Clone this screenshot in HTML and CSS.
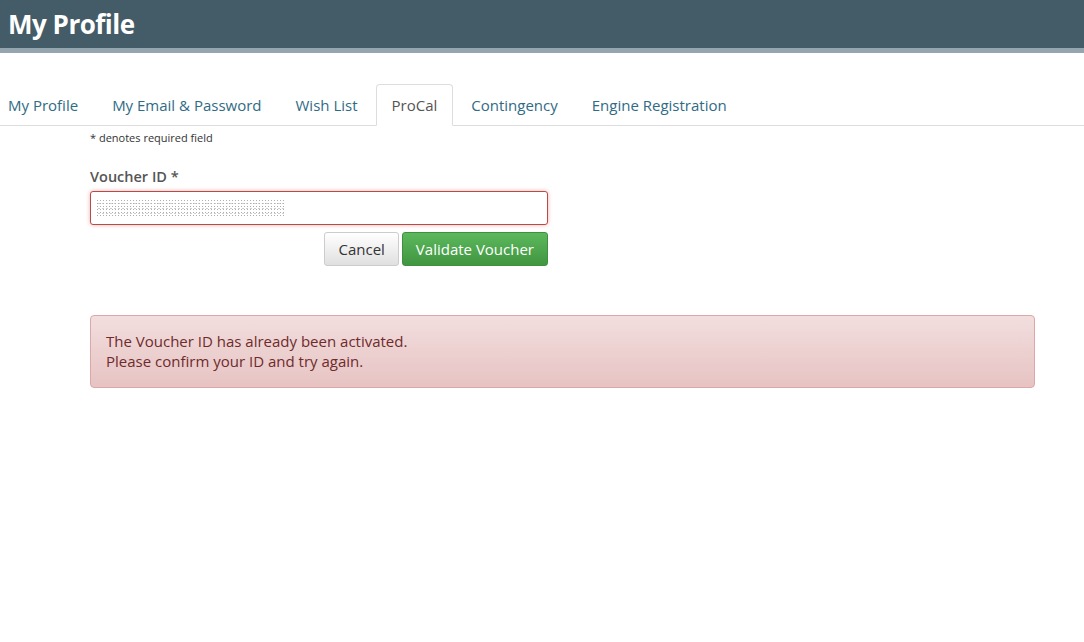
FILE: index.html
```html
<!DOCTYPE html>
<html lang="en">
<head>
  <meta charset="UTF-8" />
  <title>My Profile</title>
  <link rel="stylesheet" href="styles.css">
</head>
<body>

  <header class="page-header">
    <h1>My Profile</h1>
  </header>

  <nav class="tabs">
    <a href="#">My Profile</a>
    <a href="#">My Email &amp; Password</a>
    <a href="#">Wish List</a>
    <a href="#" class="active">ProCal</a>
    <a href="#">Contingency</a>
    <a href="#">Engine Registration</a>
  </nav>

  <main class="content">
    <p class="required-note">* denotes required field</p>

    <form class="voucher-form">
      <label for="voucher">Voucher ID *</label>
      <div class="input-wrap">
        <input type="text" id="voucher" value="">
        <span class="redacted"></span>
      </div>
      <div class="actions">
        <button type="button" class="btn btn-default">Cancel</button>
        <button type="button" class="btn btn-success">Validate Voucher</button>
      </div>
    </form>

    <div class="alert-danger">
      The Voucher ID has already been activated.<br>
      Please confirm your ID and try again.
    </div>
  </main>

</body>
</html>
```

FILE: styles.css
```css
body {
  margin: 0;
  font-family: 'Open Sans', sans-serif;
  background: #fff;
  color: #333;
}
.page-header {
  background-color: #445b68;
  border-bottom: 5px solid #94a5ae;
  height: 48px;
  display: flex;
  align-items: center;
  padding: 0 8px;
}
.page-header h1 {
  margin: 0;
  color: #fff;
  font-size: 26px;
  font-weight: 700;
  letter-spacing: -0.5px;
}
.tabs {
  display: flex;
  margin-top: 31px;
  margin-left: -8px;
  border-bottom: 1px solid #ddd;
  height: 41px;
}
.tabs a {
  display: flex;
  align-items: center;
  padding: 0 15px;
  margin-right: 2px;
  margin-bottom: -1px;
  color: #2f6b85;
  text-decoration: none;
  font-size: 15px;
  border: 1px solid transparent;
  border-radius: 4px 4px 0 0;
}
.tabs a.active {
  color: #555;
  background: #fff;
  border-color: #ddd;
  border-bottom-color: #fff;
}
.content {
  padding: 0 49px 0 90px;
}
.required-note {
  margin: 4px 0 0;
  font-size: 11px;
  color: #333;
}
.voucher-form {
  width: 458px;
  margin-top: 22px;
}
.voucher-form label {
  display: block;
  font-size: 14.5px;
  font-weight: 600;
  color: #555;
  margin-bottom: 5px;
}
.input-wrap {
  position: relative;
}
.input-wrap input {
  box-sizing: border-box;
  width: 100%;
  height: 34px;
  border: 1px solid #b94a48;
  border-radius: 3px;
  box-shadow: 0 0 4px rgba(217, 83, 79, 0.45);
  outline: none;
}
.redacted {
  position: absolute;
  left: 6px;
  top: 8px;
  width: 190px;
  height: 18px;
  background-image:
    radial-gradient(circle, #9a9a9a 0.6px, transparent 1px),
    radial-gradient(circle, #c4c4c4 0.7px, transparent 1.1px);
  background-size: 3px 3px, 4px 5px;
  background-position: 0 0, 1px 2px;
  opacity: 0.8;
}
.actions {
  display: flex;
  justify-content: flex-end;
  gap: 3px;
  margin-top: 7px;
}
.btn {
  height: 34px;
  padding: 0 13px;
  font-family: inherit;
  font-size: 15px;
  border-radius: 3px;
  cursor: pointer;
}
.btn-default {
  color: #333;
  background: linear-gradient(to bottom, #fff 0, #e0e0e0 100%);
  border: 1px solid #ccc;
}
.btn-success {
  color: #fff;
  background: linear-gradient(to bottom, #5cb85c 0, #419641 100%);
  border: 1px solid #3e8f3e;
}
.alert-danger {
  margin-top: 49px;
  padding: 15px 15px 16px;
  font-size: 15px;
  line-height: 20px;
  color: #6e2b2b;
  background: linear-gradient(to bottom, #f2dede 0, #e7c3c3 100%);
  border: 1px solid #dca7a7;
  border-radius: 4px;
}
```
